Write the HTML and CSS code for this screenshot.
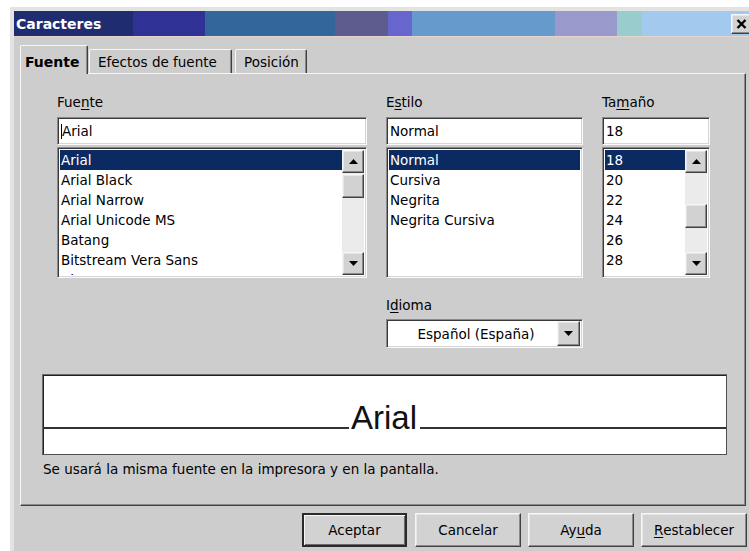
FILE: index.html
```html
<!DOCTYPE html>
<html lang="es">
<head>
<meta charset="utf-8">
<title>Caracteres</title>
<link rel="stylesheet" href="styles.css">
</head>
<body>
<div class="window">
  <div class="titlebar">
    <span class="title">Caracteres</span>
    <div class="close raised">
      <svg width="11" height="10" viewBox="0 0 11 10"><path d="M1.5 1 L9.5 9 M9.5 1 L1.5 9" stroke="#000" stroke-width="2.4" fill="none"/></svg>
    </div>
  </div>

  <div class="content">
    <div class="tabs">
      <div class="tab active">Fuente</div>
      <div class="tab tab-effects">Efectos de fuente</div>
      <div class="tab tab-position">Posición</div>
    </div>

    <div class="panel">
      <div class="fields">
        <div class="field">
          <div class="label">Fue<u>n</u>te</div>
          <div class="input sunken"><span class="caret"></span>Arial</div>
          <div class="list sunken">
            <div class="rows">
              <div class="row selected">Arial</div>
              <div class="row">Arial Black</div>
              <div class="row">Arial Narrow</div>
              <div class="row">Arial Unicode MS</div>
              <div class="row">Batang</div>
              <div class="row">Bitstream Vera Sans</div>
              <div class="row">Bitstream Vera Sans Mono</div>
            </div>
            <div class="scrollbar">
              <div class="sb-btn raised"><svg width="9" height="5" viewBox="0 0 9 5"><path d="M0 5 H9 L4.5 0 Z" fill="#000"/></svg></div>
              <div class="track">
                <div class="thumb raised"></div>
              </div>
              <div class="sb-btn raised"><svg width="9" height="5" viewBox="0 0 9 5"><path d="M0 0 H9 L4.5 5 Z" fill="#000"/></svg></div>
            </div>
          </div>
        </div>

        <div class="field">
          <div class="label">E<u>s</u>tilo</div>
          <div class="input sunken">Normal</div>
          <div class="list sunken">
            <div class="rows">
              <div class="row selected">Normal</div>
              <div class="row">Cursiva</div>
              <div class="row">Negrita</div>
              <div class="row">Negrita Cursiva</div>
            </div>
          </div>
        </div>

        <div class="field">
          <div class="label">Ta<u>m</u>año</div>
          <div class="input sunken">18</div>
          <div class="list sunken">
            <div class="rows">
              <div class="row selected">18</div>
              <div class="row">20</div>
              <div class="row">22</div>
              <div class="row">24</div>
              <div class="row">26</div>
              <div class="row">28</div>
              <div class="row">30</div>
            </div>
            <div class="scrollbar">
              <div class="sb-btn raised"><svg width="9" height="5" viewBox="0 0 9 5"><path d="M0 5 H9 L4.5 0 Z" fill="#000"/></svg></div>
              <div class="track">
                <div class="thumb thumb-mid raised"></div>
              </div>
              <div class="sb-btn raised"><svg width="9" height="5" viewBox="0 0 9 5"><path d="M0 0 H9 L4.5 5 Z" fill="#000"/></svg></div>
            </div>
          </div>
        </div>

        <div class="field field-lang">
          <div class="label lang-label">I<u>d</u>ioma</div>
          <div class="dropdown sunken">
            <span class="dropdown-value">Español (España)</span>
            <div class="dd-btn raised"><svg width="9" height="5" viewBox="0 0 9 5"><path d="M0 0 H9 L4.5 5 Z" fill="#000"/></svg></div>
          </div>
        </div>
      </div>

      <div class="preview">
        <div class="baseline-row">
          <div class="rule"></div>
          <span class="sample">Arial</span>
          <div class="rule"></div>
        </div>
      </div>
      <p class="note">Se usará la misma fuente en la impresora y en la pantalla.</p>
    </div>

    <div class="buttons">
      <div class="btn raised default">Aceptar</div>
      <div class="btn raised">Cancelar</div>
      <div class="btn raised">Ay<u>u</u>da</div>
      <div class="btn raised"><u>R</u>establecer</div>
    </div>
  </div>
</div>
</body>
</html>
```

FILE: styles.css
```css
* { box-sizing: border-box; }

body {
  margin: 0;
  background: #fff;
  font-family: "DejaVu Sans", sans-serif;
  font-size: 13.5px;
  color: #000;
  overflow: hidden;
}

u { text-decoration-thickness: 1px; text-underline-offset: 2px; }

/* 3D frames */
.raised {
  background: #d2d2d2;
  border: 1px solid;
  border-color: #f6f6f6 #404040 #404040 #f6f6f6;
  box-shadow: inset -1px -1px #8a8a8a, inset 1px 1px #e6e6e6;
}
.sunken {
  background: #fff;
  border: 1px solid;
  border-color: #8a8a8a #fafafa #fafafa #8a8a8a;
  box-shadow: inset 1px 1px #3a3a3a, inset -1px -1px #d6d6d6;
}

.window {
  margin: 7px 0 0 10px;
  width: 739px;
  height: 544px;
  border-top: 4px solid #e3e3e3;
  border-left: 4px solid #e3e3e3;
  background: #cdcdcd;
  overflow: hidden;
}

/* title bar */
.titlebar {
  height: 26px;
  display: flex;
  align-items: center;
  border-bottom: 1px solid #e6d4ce;
  background: linear-gradient(to right,
    #1f2c6f 0, #1f2c6f 119px,
    #2f3294 119px, #2f3294 191px,
    #33669b 191px, #33669b 321px,
    #5e5c8e 321px, #5e5c8e 374px,
    #6666cc 374px, #6666cc 398px,
    #6699cc 398px, #6699cc 541px,
    #9999cc 541px, #9999cc 603px,
    #99cccc 603px, #99cccc 628px,
    #a4c9ef 628px, #a4c9ef 100%);
}
.title {
  color: #fff;
  font-weight: bold;
  font-size: 14px;
  padding-left: 2px;
}
.close {
  margin-left: auto;
  margin-right: -6px;
  width: 24px;
  height: 20px;
  display: flex;
  align-items: center;
  justify-content: center;
  padding-right: 4px;
}

.content {
  padding: 8px 3px 0 6px;
}

/* tabs */
.tabs {
  display: flex;
  align-items: flex-end;
  height: 28px;
}
.tab {
  flex: none;
  height: 24px;
  padding: 4px 0 0 8px;
  line-height: 16px;
  border-top: 1px solid #f6f6f6;
  border-left: 1px solid #f6f6f6;
  border-right: 1px solid #404040;
  box-shadow: inset -1px 0 #8a8a8a;
  border-radius: 2px 2px 0 0;
}
.tab.active {
  width: 68px;
  height: 29px;
  margin-bottom: -1px;
  padding: 8px 0 0 4px;
  font-weight: bold;
  font-size: 14px;
  background: #cdcdcd;
  position: relative;
  z-index: 1;
}
.tab-effects { width: 143px; margin-left: 1px; }
.tab-position { width: 72px; margin-left: 3px; }

/* tab page */
.panel {
  height: 433px;
  border: 1px solid;
  border-color: #f6f6f6 #404040 #404040 #f6f6f6;
  box-shadow: inset -1px -1px #8a8a8a;
}

.fields {
  display: grid;
  grid-template-columns: 310px 197px 108px;
  column-gap: 19px;
  row-gap: 19px;
  padding: 20px 0 0 36px;
}
.field-lang { grid-column: 2; }

.label {
  line-height: 16px;
  margin-bottom: 7px;
}
.lang-label { margin-bottom: 6px; }

.input {
  height: 28px;
  padding: 0 3px;
  display: flex;
  align-items: center;
}
.caret {
  width: 1px;
  height: 15px;
  background: #000;
  margin-right: 0;
}

.list {
  margin-top: 2px;
  height: 131px;
  padding: 2px;
  display: flex;
  overflow: hidden;
}
.rows {
  flex: 1;
  min-width: 0;
  overflow: hidden;
}
.row {
  height: 20px;
  line-height: 20px;
  padding-left: 1px;
  white-space: nowrap;
}
.row.selected {
  background: #0b2a62;
  color: #fff;
}

.scrollbar {
  flex: none;
  width: 22px;
  display: flex;
  flex-direction: column;
  background: #ebebeb;
}
.sb-btn {
  height: 23px;
  display: flex;
  align-items: center;
  justify-content: center;
}
.track { flex: 1; }
.thumb { height: 24px; margin-top: 1px; }
.thumb-mid { margin-top: 31px; }

.dropdown {
  height: 29px;
  padding: 2px;
  display: flex;
  align-items: center;
}
.dropdown-value {
  flex: 1;
  text-align: center;
  padding-left: 6px;
}
.dd-btn {
  width: 23px;
  height: 25px;
  display: flex;
  align-items: center;
  justify-content: center;
}

/* preview */
.preview {
  margin: 26px 18px 0 21px;
  height: 81px;
  background: #fff;
  border: 1px solid;
  border-color: #6a6a6a #505050 #505050 #6a6a6a;
  box-shadow: inset 1px 1px #222;
}
.baseline-row {
  display: flex;
  align-items: flex-end;
  height: 54px;
}
.rule {
  flex: 1;
  border-bottom: 2px solid #333;
}
.sample {
  font-family: "Liberation Sans", Arial, sans-serif;
  font-size: 33px;
  line-height: 33px;
  margin: 0 3px -5px 2px;
  color: #111;
}

.note {
  margin: 6px 0 0 22px;
  line-height: 16px;
}

/* dialog buttons */
.buttons {
  display: flex;
  justify-content: flex-end;
  gap: 7px;
  margin: 7px -1px 0 0;
}
.btn {
  width: 106px;
  height: 34px;
  display: flex;
  align-items: center;
  justify-content: center;
}
.btn.default {
  width: 105px;
  margin-right: 1px;
  border: 2px solid;
  border-color: #2a2a2a;
  box-shadow: inset 1px 1px #f6f6f6, inset -1px -1px #6a6a6a;
}
```
